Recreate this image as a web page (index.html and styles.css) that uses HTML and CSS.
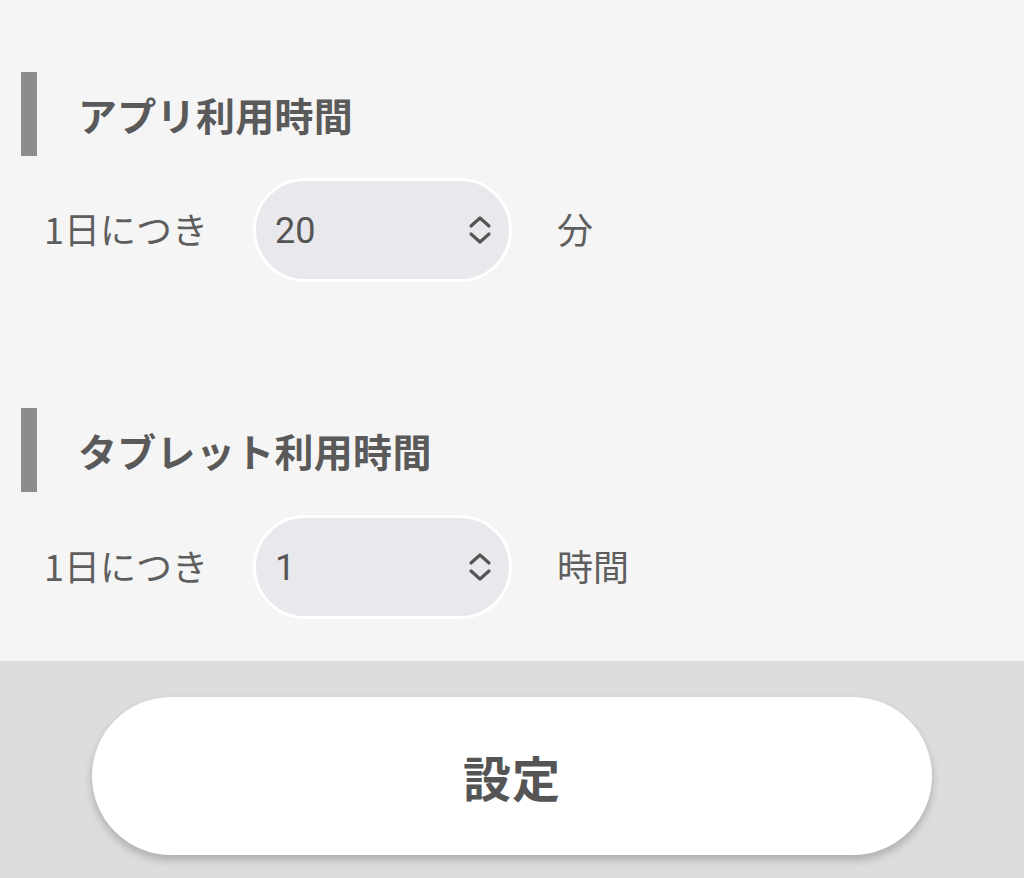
FILE: index.html
```html
<!DOCTYPE html>
<html lang="ja">
<head>
<meta charset="utf-8">
<title>利用時間設定</title>
<link rel="stylesheet" href="styles.css">
</head>
<body>
<main class="content">
  <section class="section">
    <h2 class="heading">アプリ利用時間</h2>
    <div class="row">
      <span class="label">1日につき</span>
      <div class="pill">
        <span class="value">20</span>
        <svg class="chev" viewBox="0 0 24 30" width="24" height="30"><path d="M3 11 L12 3 L21 11 M3 19 L12 27 L21 19" fill="none" stroke="#555" stroke-width="3.2" stroke-linecap="round" stroke-linejoin="round"/></svg>
      </div>
      <span class="unit">分</span>
    </div>
  </section>
  <section class="section second">
    <h2 class="heading">タブレット利用時間</h2>
    <div class="row row2">
      <span class="label">1日につき</span>
      <div class="pill">
        <span class="value">1</span>
        <svg class="chev" viewBox="0 0 24 30" width="24" height="30"><path d="M3 11 L12 3 L21 11 M3 19 L12 27 L21 19" fill="none" stroke="#555" stroke-width="3.2" stroke-linecap="round" stroke-linejoin="round"/></svg>
      </div>
      <span class="unit">時間</span>
    </div>
  </section>
</main>
<footer class="footer">
  <button class="submit" type="button">設定</button>
</footer>
</body>
</html>
```

FILE: styles.css
```css
html, body {
  margin: 0;
  padding: 0;
}
body {
  background: #dddddd;
  font-family: "Noto Sans CJK JP", "Noto Sans", sans-serif;
  color: #555555;
  height: 878px;
  overflow: hidden;
}
.content {
  background: #f5f5f5;
  padding: 72px 0 42px;
}
.section.second {
  margin-top: 126px;
}
.heading {
  margin: 0 0 0 21px;
  height: 84px;
  border-left: 16px solid #8c8c8c;
  padding-left: 41px;
  display: flex;
  align-items: center;
  font-size: 39px;
  font-weight: 700;
  color: #5a5a5a;
  letter-spacing: 0.3px;
}
.row {
  display: flex;
  align-items: center;
  margin-top: 22px;
  height: 104px;
}
.row2 {
  margin-top: 23px;
}
.label {
  flex: none;
  width: 253px;
  padding-left: 44px;
  padding-bottom: 4px;
  box-sizing: border-box;
  font-size: 36px;
  color: #5e5e5e;
}
.pill {
  flex: none;
  width: 259px;
  height: 104px;
  box-sizing: border-box;
  border: 3px solid #ffffff;
  border-radius: 52px;
  background: #e9e9ed;
  display: flex;
  align-items: center;
  justify-content: space-between;
  padding: 0 17px 0 19px;
}
.value {
  font-family: Roboto, "Noto Sans", sans-serif;
  font-size: 36px;
  color: #555555;
  padding-top: 2px;
}
.chev {
  display: block;
}
.unit {
  margin-left: 45px;
  padding-bottom: 4px;
  font-size: 36px;
  color: #5e5e5e;
}
.footer {
  padding-top: 36px;
  display: flex;
  justify-content: center;
}
.submit {
  width: 840px;
  height: 158px;
  border: none;
  border-radius: 79px;
  background: #ffffff;
  box-shadow: 0 5px 8px rgba(0, 0, 0, 0.22);
  font-family: "Noto Sans CJK JP", "Noto Sans", sans-serif;
  font-size: 48px;
  font-weight: 700;
  color: #555555;
  letter-spacing: 1px;
}
```
